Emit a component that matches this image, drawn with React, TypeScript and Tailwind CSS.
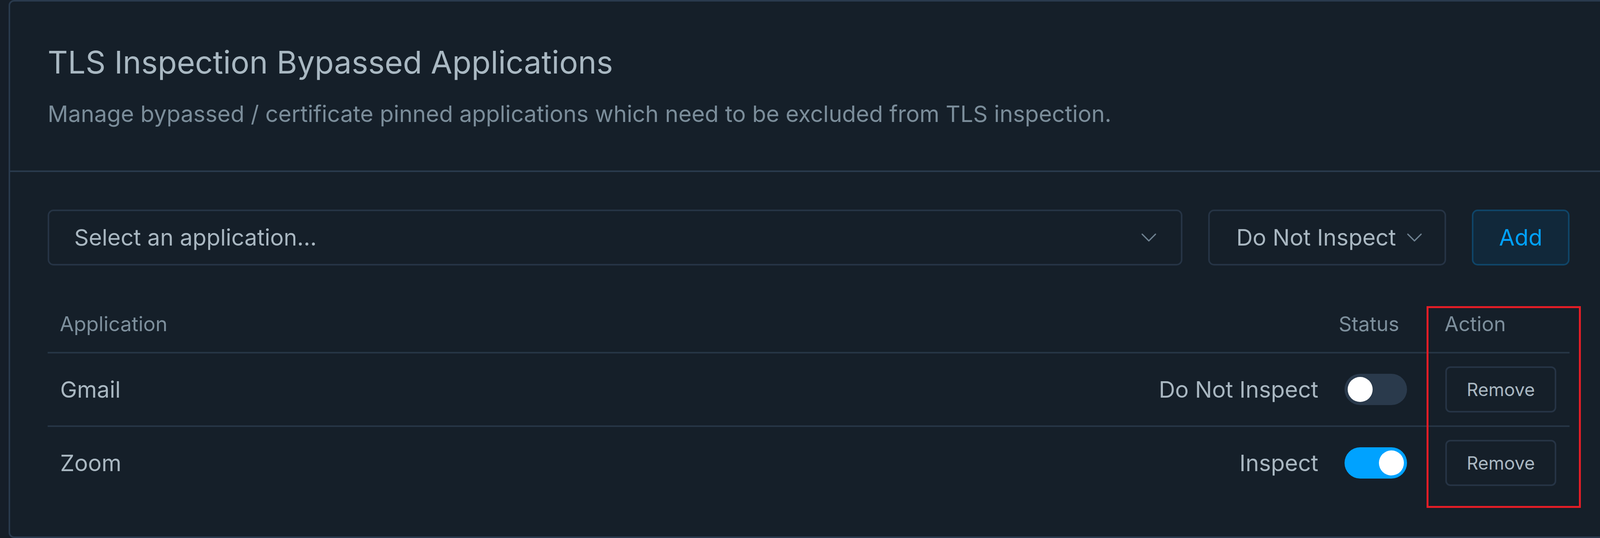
import React from "react";

function Chevron() {
  return (
    <svg width="38" height="22" viewBox="0 0 38 22" fill="none" className="shrink-0">
      <polyline points="2,2 19,19 36,2" stroke="#6e8190" strokeWidth="3.2" strokeLinecap="round" strokeLinejoin="round" />
    </svg>
  );
}

function Toggle({ on }: { on: boolean }) {
  return (
    <div
      className={
        on
          ? "flex h-[80px] w-[160px] shrink-0 items-center justify-end rounded-full bg-[#00a2ff] px-[8px]"
          : "flex h-[80px] w-[160px] shrink-0 items-center justify-start rounded-full bg-[#2a3a4c] px-[8px]"
      }
    >
      <div className="h-[64px] w-[64px] rounded-full bg-white" />
    </div>
  );
}

const rows = [
  { name: "Gmail", status: "Do Not Inspect", on: false },
  { name: "Zoom", status: "Inspect", on: true },
];

export default function App() {
  return (
    <div className="relative h-[1376px] w-full overflow-hidden bg-[#151e28] font-[Inter,sans-serif]">
      <div className="ml-[22px] w-full rounded-[14px] border-4 border-[#293a4d] bg-[#151f29]">
        {/* header */}
        <div className="border-b-4 border-[#293a4d] px-[96px] pt-[107px] pb-[102px]">
          <h1 className="text-[80px] leading-[96px] font-normal text-[#a9b8c2]">
            TLS Inspection Bypassed Applications
          </h1>
          <p className="mt-[41px] text-[58px] leading-[86px] text-[#7b8d9a]">
            Manage bypassed / certificate pinned applications which need to be excluded from TLS inspection.
          </p>
        </div>

        {/* body */}
        <div className="px-[96px] pt-[96px] pb-[96px]">
          <div className="flex gap-[66px]">
            <div className="flex h-[143px] min-w-0 flex-1 items-center justify-between rounded-[15px] border-4 border-[#263445] pl-[64px] pr-[63px]">
              <span className="truncate text-[58px] text-[#a9b7c1]">Select an application...</span>
              <Chevron />
            </div>
            <div className="flex h-[143px] w-[609px] shrink-0 items-center gap-[28px] rounded-[15px] border-4 border-[#263445] pl-[68px]">
              <span className="text-[58px] text-[#a9b7c1]">Do Not Inspect</span>
              <Chevron />
            </div>
            <button className="flex h-[143px] w-[250px] shrink-0 items-center justify-center rounded-[15px] border-4 border-[#0f4568] bg-[#11283a] text-[58px] text-[#00a2ff]">
              Add
            </button>
          </div>

          <div className="mt-[79px]">
            <div className="flex h-[146px] items-center border-b-4 border-[#263545] text-[52px] text-[#7d8f9c]">
              <div className="flex-1 pl-[31px]">Application</div>
              <div className="pr-[20px]">Status</div>
              <div className="w-[416px] shrink-0 pl-[96px]">Action</div>
            </div>
            {rows.map((r, i) => (
              <div
                key={r.name}
                className={
                  i === 0
                    ? "flex h-[188px] items-center border-b-4 border-[#263545] text-[58px] text-[#a9b7c1]"
                    : "flex h-[184px] items-center text-[58px] text-[#a9b7c1]"
                }
              >
                <div className="flex-1 pl-[32px]">{r.name}</div>
                <div className="flex items-center gap-[67px]">
                  <span>{r.status}</span>
                  <Toggle on={r.on} />
                </div>
                <div className="w-[416px] shrink-0 pl-[98px] pr-[34px]">
                  <button className="flex h-[118px] w-full items-center justify-center rounded-[13px] border-4 border-[#263445] text-[46px] text-[#a9b7c1]">
                    Remove
                  </button>
                </div>
              </div>
            ))}
          </div>
        </div>
      </div>

      {/* red annotation box */}
      <div className="pointer-events-none absolute right-[49px] top-[783px] h-[516px] w-[395px] border-[5px] border-[#e51d26]" />
    </div>
  );
}
